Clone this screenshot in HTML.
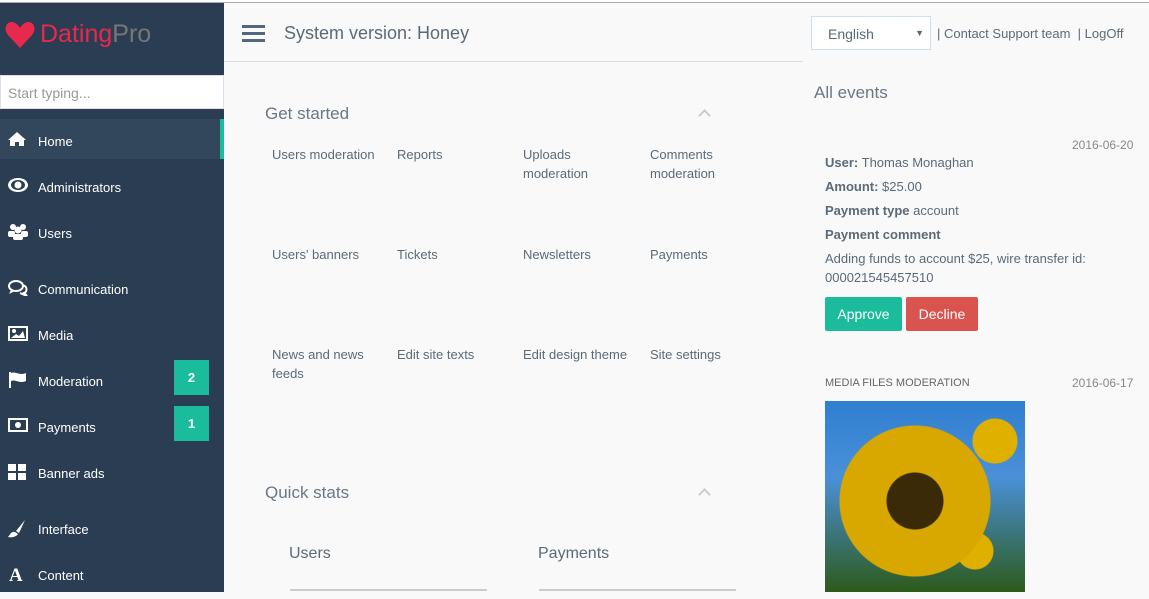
<!DOCTYPE html>
<html><head><meta charset="utf-8"><style>
*{margin:0;padding:0;box-sizing:border-box}
body{width:1149px;height:592px;overflow:hidden;background:#f9f9f9;font-family:"Liberation Sans",sans-serif;position:relative;color:#6b7785}
.top{position:absolute;left:0;top:0;width:1149px;height:3px;background:#fff;border-bottom:1px solid #aaa}
.sb{position:absolute;left:0;top:3px;width:224px;height:589px;background:#2a3d52}
.logo{position:absolute;left:40px;top:20px;font-size:25px;color:#e8294e}
.logo span{color:#777}
.search{position:absolute;left:0;top:75px;width:224px;height:34px;background:#fff;border:1px solid #dde;font-size:14px;color:#999;padding:9px 7px}
.item{position:absolute;left:0;width:224px;height:40px;color:#fff;font-size:13px;line-height:46px;padding-left:38px}
.item svg{position:absolute;left:8px;top:13px}
.act{background:#33475c}
.act:after{content:"";position:absolute;right:0;top:0;width:4px;height:40px;background:#1abc9c}
.badge{position:absolute;left:174px;width:35px;height:35px;background:#1abc9c;color:#fff;font-size:13px;font-weight:bold;text-align:center;line-height:35px}
.hdr{position:absolute;left:224px;top:3px;width:579px;height:59px;border-bottom:1px solid #ddd}
.ham{position:absolute;left:242px;top:25px;width:23px;height:3px;background:#54677c;box-shadow:0 7px 0 #54677c,0 14px 0 #54677c}
.t{position:absolute;white-space:nowrap}
.lnk{font-size:13px;color:#5c6a78;line-height:19px}
.sel{position:absolute;left:811px;top:16px;width:120px;height:34px;border:1px solid #cfe0ea;background:#fff;font-size:14px;padding:9px 16px;color:#5c6a78}
.btn{position:absolute;top:297px;height:34px;color:#fff;font-size:14px;line-height:34px;text-align:center;border-radius:2px}
.chev{position:absolute;width:9px;height:9px;border-left:2px solid #ccc;border-top:2px solid #ccc;transform:rotate(45deg)}
</style></head><body>
<div class="top"></div>
<div class="sb"></div>
<svg style="position:absolute;left:5px;top:21px" width="30" height="27" viewBox="0 0 30 27"><path d="M15 27 L3 14 C-3 7 3 -2 10 2 C12 3 14 5 15 7 C16 5 18 3 20 2 C27 -2 33 7 27 14 Z" fill="#e8294e"/></svg>
<div class="logo">Dating<span>Pro</span></div>
<div class="search">Start typing...</div>
<div class="item act" style="top:119px"><svg width="18" height="14" viewBox="0 0 18 14"><path d="M9 0 L18 8 L16 8 L16 14 L11 14 L11 10 L7 10 L7 14 L2 14 L2 8 L0 8 Z" fill="#fff"/></svg>Home</div>
<div class="item" style="top:165px"><svg width="20" height="14" viewBox="0 0 20 14"><ellipse cx="10" cy="7" rx="10" ry="7" fill="#fff"/><ellipse cx="10" cy="7" rx="7" ry="5" fill="#2a3d52"/><circle cx="10" cy="7" r="3.5" fill="#fff"/></svg>Administrators</div>
<div class="item" style="top:211px"><svg width="20" height="16" viewBox="0 0 20 16"><circle cx="5" cy="3" r="3" fill="#fff"/><circle cx="15" cy="3" r="3" fill="#fff"/><circle cx="10" cy="6" r="3.5" fill="#fff"/><rect x="0" y="7" width="7" height="6" rx="2" fill="#fff"/><rect x="13" y="7" width="7" height="6" rx="2" fill="#fff"/><rect x="5" y="10" width="10" height="6" rx="2" fill="#fff"/></svg>Users</div>
<div class="item" style="top:267px"><svg width="20" height="16" viewBox="0 0 20 16"><ellipse cx="8" cy="6" rx="7" ry="5" fill="none" stroke="#fff" stroke-width="2"/><path d="M3 10 L1 14 L7 11" fill="#fff"/><path d="M15 5 C20 7 19 12 16 13 L19 16 L12 13" fill="none" stroke="#fff" stroke-width="2"/></svg>Communication</div>
<div class="item" style="top:313px"><svg width="20" height="15" viewBox="0 0 20 15"><rect x="1" y="1" width="18" height="13" fill="none" stroke="#fff" stroke-width="2"/><circle cx="6" cy="5" r="2" fill="#fff"/><path d="M3 12 L8 8 L11 10 L15 5 L17 12Z" fill="#fff"/></svg>Media</div>
<div class="item" style="top:359px"><svg width="20" height="16" viewBox="0 0 20 16"><rect x="1" y="0" width="2" height="16" fill="#fff"/><path d="M3 1 C8 -1 11 4 18 1 L18 9 C11 12 8 7 3 9Z" fill="#fff"/></svg>Moderation</div>
<div class="item" style="top:405px"><svg width="20" height="14" viewBox="0 0 20 14"><rect x="1" y="1" width="18" height="12" fill="none" stroke="#fff" stroke-width="2"/><circle cx="10" cy="7" r="3" fill="#fff"/></svg>Payments</div>
<div class="item" style="top:451px"><svg width="18" height="16" viewBox="0 0 18 16"><rect x="0" y="0" width="8" height="7" fill="#fff"/><rect x="10" y="0" width="8" height="7" fill="#fff"/><rect x="0" y="9" width="8" height="7" fill="#fff"/><rect x="10" y="9" width="8" height="7" fill="#fff"/></svg>Banner ads</div>
<div class="item" style="top:507px"><svg width="18" height="18" viewBox="0 0 18 18"><path d="M17 0 L8 11 L11 13 Z" fill="#fff"/><path d="M7 12 C3 11 2 15 0 17 C5 18 9 16 10 14Z" fill="#fff"/></svg>Interface</div>
<div class="item" style="top:553px"><span style="position:absolute;left:9px;top:0;font:bold 19px 'Liberation Serif';line-height:46px">A</span>Content</div>
<div class="badge" style="top:360px">2</div>
<div class="badge" style="top:406px">1</div>
<div class="hdr"></div>
<div class="ham"></div>
<div class="t" style="left:284px;top:23px;font-size:18px;color:#5c6a78">System version: Honey</div>
<div class="sel">English<span style="position:absolute;right:6px;font-size:9px;top:11px">▼</span></div>
<div class="t lnk" style="left:937px;top:24px">| Contact Support team &nbsp;| LogOff</div>
<div class="t" style="left:265px;top:104px;font-size:17px">Get started</div>
<div class="chev" style="left:700px;top:111px"></div>
<div class="t lnk" style="left:272px;top:145px">Users moderation</div>
<div class="t lnk" style="left:397px;top:145px">Reports</div>
<div class="t lnk" style="left:523px;top:145px">Uploads<br>moderation</div>
<div class="t lnk" style="left:650px;top:145px">Comments<br>moderation</div>
<div class="t lnk" style="left:272px;top:245px">Users' banners</div>
<div class="t lnk" style="left:397px;top:245px">Tickets</div>
<div class="t lnk" style="left:523px;top:245px">Newsletters</div>
<div class="t lnk" style="left:650px;top:245px">Payments</div>
<div class="t lnk" style="left:272px;top:345px">News and news<br>feeds</div>
<div class="t lnk" style="left:397px;top:345px">Edit site texts</div>
<div class="t lnk" style="left:523px;top:345px">Edit design theme</div>
<div class="t lnk" style="left:650px;top:345px">Site settings</div>
<div class="t" style="left:265px;top:483px;font-size:17px">Quick stats</div>
<div class="chev" style="left:700px;top:490px"></div>
<div class="t" style="left:289px;top:545px;font-size:16px;color:#5c6a78">Users</div>
<div class="t" style="left:538px;top:545px;font-size:16px;color:#5c6a78">Payments</div>
<div style="position:absolute;left:290px;top:589px;width:197px;height:2px;background:#ccc"></div>
<div style="position:absolute;left:539px;top:589px;width:197px;height:2px;background:#ccc"></div>
<div class="t" style="left:814px;top:83px;font-size:17px">All events</div>
<div class="t" style="left:1072px;top:138px;font-size:12px;color:#888">2016-06-20</div>
<div class="t lnk" style="left:825px;top:151px;line-height:24px"><b>User:</b> Thomas Monaghan<br><b>Amount:</b> $25.00<br><b>Payment type</b> account<br><b>Payment comment</b></div>
<div class="t lnk" style="left:825px;top:249px">Adding funds to account $25, wire transfer id:<br>000021545457510</div>
<div class="btn" style="left:825px;width:77px;background:#1abc9c">Approve</div>
<div class="btn" style="left:906px;width:72px;background:#d9534f">Decline</div>
<div class="t" style="left:825px;top:377px;font-size:11px;color:#666">MEDIA FILES MODERATION</div>
<div class="t" style="left:1072px;top:376px;font-size:12px;color:#888">2016-06-17</div>
<div style="position:absolute;left:825px;top:401px;width:200px;height:191px;background:radial-gradient(circle at 90px 100px,#3a2a08 0 28px,#d8a800 29px 75px,transparent 76px),radial-gradient(circle at 170px 40px,#e0b000 0 22px,transparent 23px),radial-gradient(circle at 150px 150px,#e0b000 0 18px,transparent 19px),linear-gradient(180deg,#2f7fd0,#4a90d8 40%,#2d5a1a)"></div>
</body></html>
